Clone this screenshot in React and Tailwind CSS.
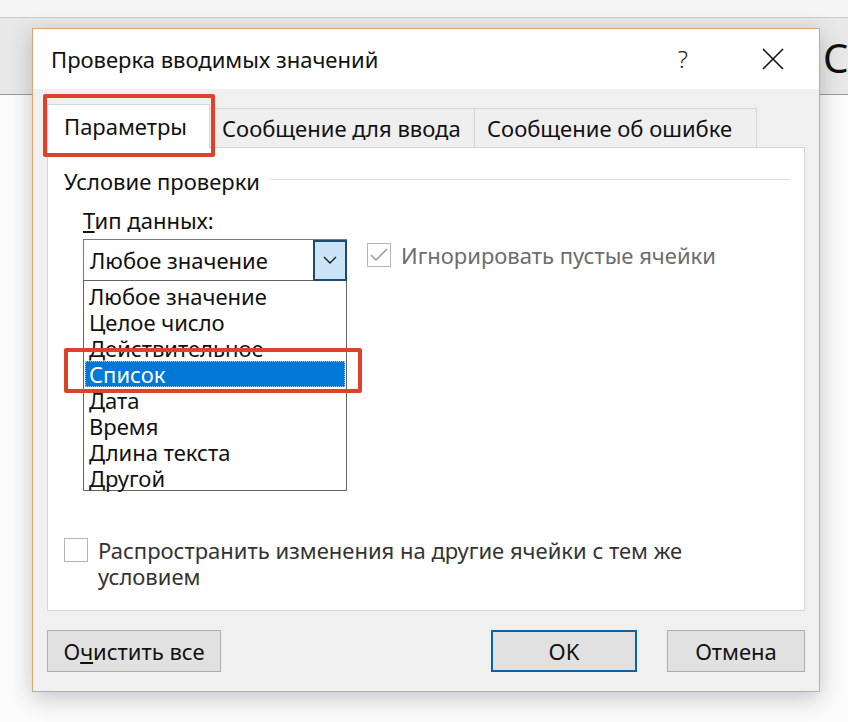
import React from 'react';

// ── Data ───────────────────────────────────────────────────────────────────────

const TYPES = [
    'Любое значение',
    'Целое число',
    'Действительное',
    'Список',
    'Дата',
    'Время',
    'Длина текста',
    'Другой',
];

// ── Small pieces ───────────────────────────────────────────────────────────────

function Chevron() {
    return (
        <svg width="14" height="8" viewBox="0 0 14 8" fill="none">
            <path d="M1 1l6 6 6-6" stroke="#1a1a1a" strokeWidth="1.4" />
        </svg>
    );
}

function CloseGlyph() {
    return (
        <svg width="22" height="22" viewBox="0 0 22 22" fill="none">
            <path d="M1 1l20 20M21 1L1 21" stroke="#111" strokeWidth="1.6" />
        </svg>
    );
}

function Checkbox({ checked }) {
    return (
        <div className="w-[24px] h-[24px] shrink-0 border border-[#b4b4b4] bg-white flex items-center justify-center">
            {checked && (
                <svg width="18" height="14" viewBox="0 0 18 14" fill="none">
                    <path d="M1 7l5 5L17 1" stroke="#9a9a9a" strokeWidth="1.5" />
                </svg>
            )}
        </div>
    );
}

function Tab({ label, selected, width }) {
    if (selected) {
        return (
            <div className={`${width} h-[44px] relative z-10 -mb-px bg-white border border-b-0 border-[#d6d6d6] flex items-center pl-[16px] pb-[2px]`}>
                {label}
            </div>
        );
    }
    return (
        <div className={`${width} h-[39px] bg-[#efefef] border border-b-0 border-l-0 border-[#d6d6d6] flex items-center pl-[12px]`}>
            {label}
        </div>
    );
}

// ── Dialog ─────────────────────────────────────────────────────────────────────

function ValidationDialog() {
    return (
        <div className="absolute left-[32px] top-[28px] w-[788px] h-[664px] border border-[#dda56e] bg-[#f0f0f0] shadow-[0_6px_22px_rgba(0,0,0,0.22)] flex flex-col">
            {/* title bar */}
            <div className="h-[60px] shrink-0 bg-white flex items-center pl-[18px] pr-[35px]">
                <span className="text-[22px] text-[#111]">Проверка вводимых значений</span>
                <span className="ml-auto text-[24px] font-light text-[#222] mr-[74px]">?</span>
                <CloseGlyph />
            </div>

            <div className="px-[14px] pt-[15px] flex flex-col leading-[26px]">
                {/* tabs */}
                <div className="flex items-end text-[22px] text-[#111]">
                    <Tab label="Параметры" selected width="w-[163px]" />
                    <Tab label="Сообщение для ввода" width="w-[265px]" />
                    <Tab label="Сообщение об ошибке" width="w-[282px]" />
                </div>

                {/* panel */}
                <div className="h-[464px] bg-white border border-[#d6d6d6] pl-[16px] pr-[14px] pt-[20px] text-[22px] text-[#111]">
                    <div className="flex items-center h-[26px]">
                        <span>Условие проверки</span>
                        <div className="flex-1 ml-[10px] mt-[-3px] border-t border-[#dcdcdc]" />
                    </div>

                    <div className="pl-[19px]">
                        <div className="h-[26px] mt-[13px]"><u>Т</u>ип данных:</div>

                        <div className="flex items-start mt-[6px]">
                            <div className="w-[264px] shrink-0">
                                <div className="h-[41px] border border-[#7a7a7a] border-b-0 flex items-center">
                                    <span className="pl-[6px] flex-1">Любое значение</span>
                                    <div className="w-[34px] h-[41px] -mr-px bg-[#cce4f7] border-2 border-[#1e4a70] flex items-center justify-center">
                                        <Chevron />
                                    </div>
                                </div>
                                <div className="h-[211px] border border-[#646464] pt-[2px] px-px">
                                    {TYPES.map((t) => (
                                        <div
                                            key={t}
                                            className={
                                                t === 'Список'
                                                    ? 'h-[26px] pl-[4px] bg-[#0078d7] text-white outline-1 outline-dotted outline-[#9cc7ee] -outline-offset-1'
                                                    : 'h-[26px] pl-[4px]'
                                            }
                                        >
                                            {t}
                                        </div>
                                    ))}
                                </div>
                            </div>

                            <div className="flex items-center ml-[20px] mt-[3px] gap-[10px] text-[#6d6d6d]">
                                <Checkbox checked />
                                <span>Игнорировать пустые ячейки</span>
                            </div>
                        </div>
                    </div>

                    <div className="flex items-start gap-[10px] mt-[47px]">
                        <Checkbox />
                        <p className="-mt-[1px] w-[600px] text-[#333]">
                            Распространить изменения на другие ячейки с тем же условием
                        </p>
                    </div>
                </div>

                {/* buttons */}
                <div className="flex mt-[19px] text-[22px] text-[#111]">
                    <button className="w-[174px] h-[42px] bg-[#e1e1e1] border border-[#adadad]">
                        О<u>ч</u>истить все
                    </button>
                    <button className="ml-auto w-[146px] h-[42px] bg-[#e1e1e1] border-2 border-[#0a64ad]">
                        OK
                    </button>
                    <button className="ml-[30px] w-[138px] h-[42px] bg-[#e1e1e1] border border-[#adadad]">
                        Отмена
                    </button>
                </div>
            </div>
        </div>
    );
}

// ── Page ───────────────────────────────────────────────────────────────────────

export default function App() {
    return (
        <div className="relative w-[848px] h-[722px] overflow-hidden bg-[#fbfbfb] font-['Noto_Sans','Liberation_Sans',sans-serif]">
            {/* workbook behind the dialog */}
            <div className="h-[18px] bg-[#f5f5f5] border-b border-[#cdcdcd]" />
            <div className="h-[77px] bg-[#e8e8e8] border-b border-[#9c9c9c] pl-[823px] pt-[20px]">
                <span className="text-[40px] leading-[40px] text-[#111]">С</span>
            </div>

            <ValidationDialog />

            {/* red callouts */}
            <div className="absolute left-[43px] top-[94px] w-[172px] h-[63px] border-4 border-[#e0412b] rounded-[2px] z-20" />
            <div className="absolute left-[64px] top-[348px] w-[298px] h-[45px] border-4 border-[#e0412b] rounded-[2px] z-20" />
        </div>
    );
}
